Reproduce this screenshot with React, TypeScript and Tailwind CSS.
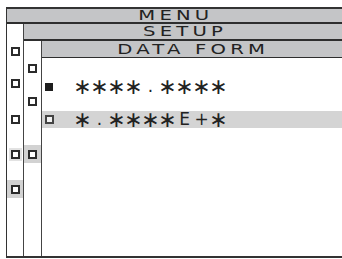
import React from "react";

const font = "font-['DejaVu_Sans',sans-serif]";

function Bar({ label, className }: { label: string; className: string }) {
  return (
    <div className={`flex items-center justify-center bg-[#c4c5c7] border-[#2e2e2e] ${className}`}>
      <span className="inline-block text-[14px] leading-[11px] text-[#222] tracking-[3px] mr-[-3px] scale-x-[1.4] whitespace-pre">
        {label}
      </span>
    </div>
  );
}

function Box({ mt, bg = "" }: { mt: string; bg?: string }) {
  return (
    <div className={`flex h-[18px] items-center justify-center ${mt} ${bg}`}>
      <div className="h-[9px] w-[9px] border-2 border-[#2b2b2b] bg-white" />
    </div>
  );
}

function Cells({ text }: { text: string }) {
  return (
    <div className="flex">
      {text.split("").map((ch, i) => (
        <span key={i} className="flex h-[17px] w-[17px] items-center justify-center leading-none text-[#222]">
          {ch === "*" ? (
            <span className="text-[22px] leading-none">{"\u2217"}</span>
          ) : (
            <span className="text-[17px] leading-none">{ch}</span>
          )}
        </span>
      ))}
    </div>
  );
}

export default function App() {
  return (
    <div className={`h-[259px] w-[342px] overflow-hidden bg-white pl-[6px] pt-[7px] ${font}`}>
      <div className="flex h-[251px] w-[336px] flex-col border-t-2 border-l border-b-2 border-[#333]">
        <Bar label="MENU" className="h-[15px] border-b-2" />
        <div className="flex flex-1">
          {/* left column */}
          <div className="flex w-[17px] flex-col border-r border-[#444]">
            <Box mt="mt-[18px]" />
            <Box mt="mt-[14px]" />
            <Box mt="mt-[18px]" />
            <div className="mt-[17px] flex h-[18px] items-center justify-center">
              <div className="flex h-[13px] w-[13px] items-center justify-center bg-[#e2e2e2]">
                <div className="h-[9px] w-[9px] border-2 border-[#2b2b2b] bg-white" />
              </div>
            </div>
            <Box mt="mt-[17px]" bg="bg-[#d2d2d2]" />
          </div>
          <div className="flex flex-1 flex-col">
            <Bar label="SETUP" className="h-[17px] border-b-2" />
            <div className="flex flex-1">
              {/* second column */}
              <div className="flex w-[18px] flex-col border-r border-[#444]">
                <Box mt="mt-[18px]" />
                <Box mt="mt-[15px]" />
                <Box mt="mt-[35px]" bg="bg-[#d2d2d2]" />
              </div>
              <div className="flex flex-1 flex-col">
                <Bar label="DATA FORM" className="h-[17px] border-b" />
                <div className="mt-[20px] flex h-[17px] items-center pl-[3px]">
                  <div className="h-[8px] w-[8px] bg-[#1e1e1e]" />
                  <div className="ml-[21px]">
                    <Cells text="****.****" />
                  </div>
                </div>
                <div className="mt-[16px] flex h-[17px] items-center bg-[#d4d4d4] pl-[3px]">
                  <div className="h-[9px] w-[9px] border-2 border-[#444] bg-[#f2f2f2]" />
                  <div className="ml-[20px]">
                    <Cells text="*.****E+*" />
                  </div>
                </div>
              </div>
            </div>
          </div>
        </div>
      </div>
    </div>
  );
}
